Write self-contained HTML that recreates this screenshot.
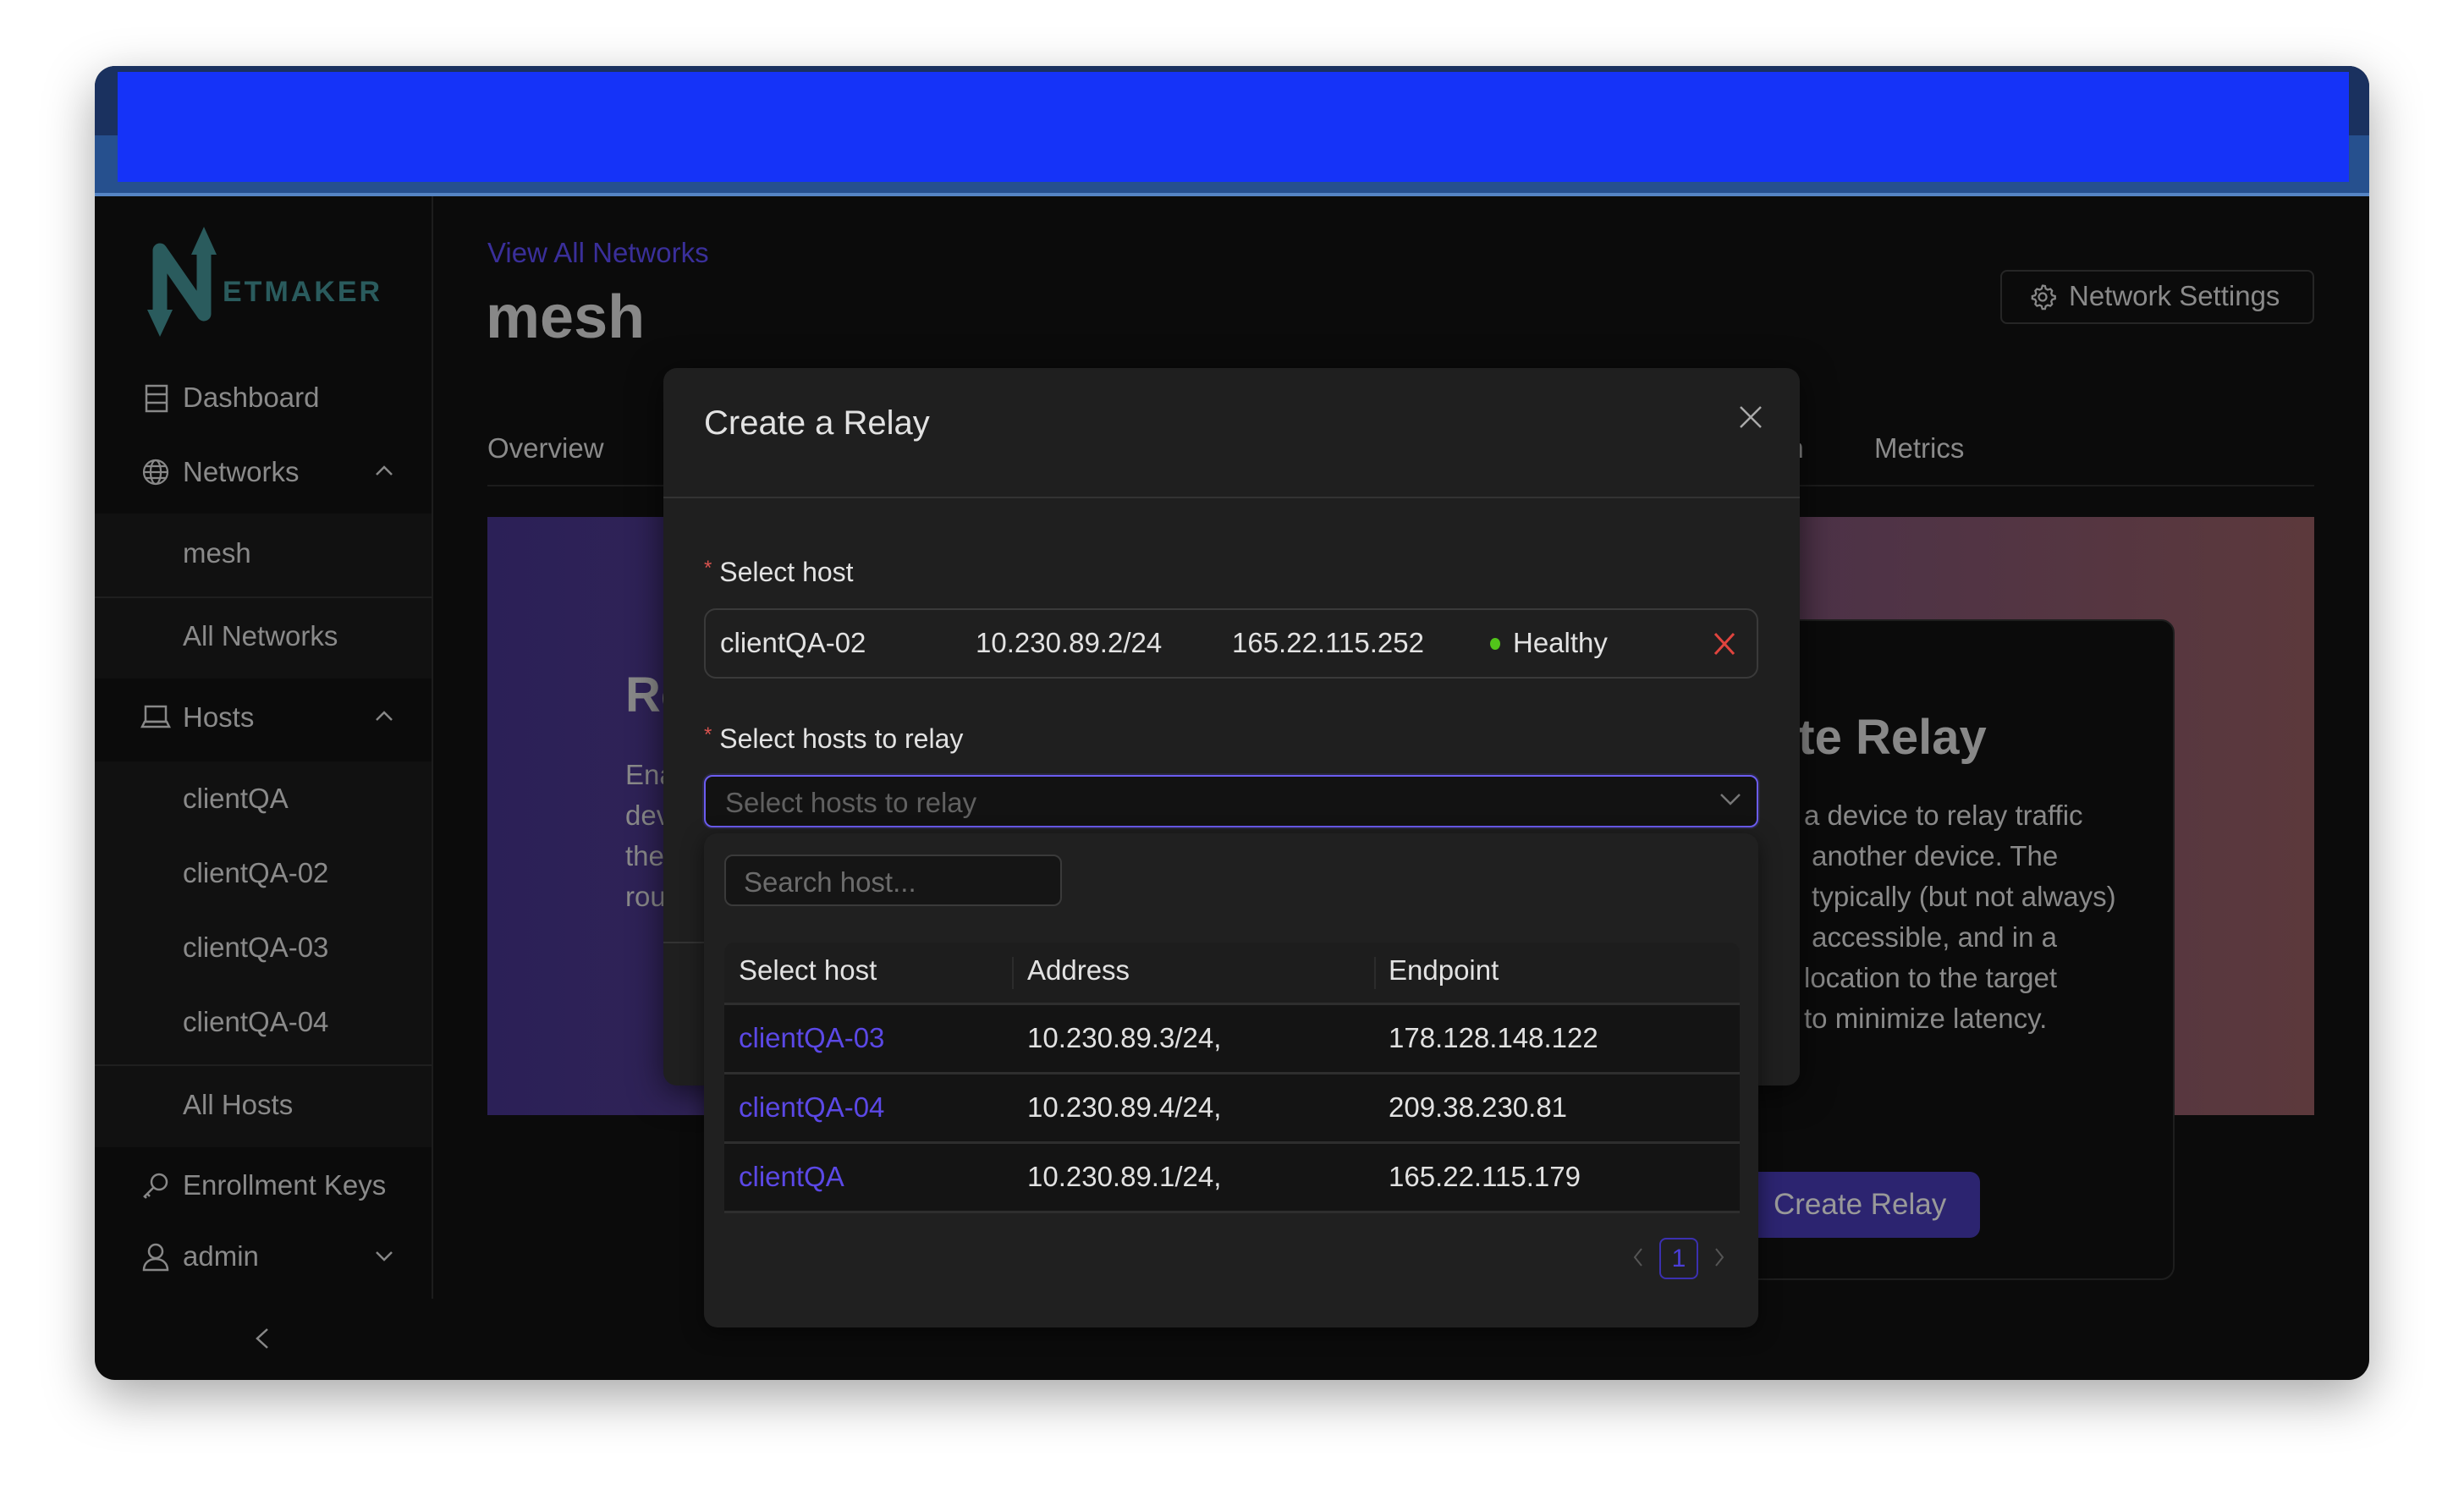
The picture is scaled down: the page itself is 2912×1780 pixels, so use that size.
<!DOCTYPE html>
<html><head><meta charset="utf-8"><style>
*{box-sizing:border-box;margin:0;padding:0}
body{width:2912px;height:1780px;background:#fff;position:relative;overflow:hidden;font-family:"Liberation Sans",sans-serif;}
.a{position:absolute;white-space:nowrap}
.win{position:absolute;left:112px;top:78px;width:2688px;height:1553px;border-radius:24px;overflow:hidden;background:#0b0b0b;box-shadow:0 20px 60px rgba(0,0,0,.35)}
.t{font-size:32px;color:#8a8a8a}
.s{font-size:33px}
.w{color:#e2e2e2}
</style></head><body>
<div class="win">
  <div class="a" style="left:0;top:0;width:2688px;height:82px;background:#1a315f"></div>
  <div class="a" style="left:0;top:82px;width:2688px;height:68px;background:#26508e"></div>
  <div class="a" style="left:0;top:150px;width:2688px;height:4px;background:#5584c4"></div>
  <div class="a" style="left:27px;top:7px;width:2637px;height:130px;background:#1533f8"></div>

  <!-- sidebar -->
  <div class="a" style="left:0;top:154px;width:400px;height:1303px;border-right:2px solid #1d1d1d"></div>
  <div class="a" style="left:0;top:529px;width:398px;height:195px;background:#111"></div>
  <div class="a" style="left:0;top:627px;width:398px;height:2px;background:#1f1f1f"></div>
  <div class="a" style="left:0;top:822px;width:398px;height:456px;background:#111"></div>
  <div class="a" style="left:0;top:1180px;width:398px;height:2px;background:#1f1f1f"></div>

  <svg class="a" style="left:50px;top:188px" width="360" height="135" viewBox="0 0 360 135">
    <g stroke="#2a5b5d" stroke-width="17" stroke-linecap="round" stroke-linejoin="round" fill="none">
      <polyline points="27,110 27,30 79,105 79,25"/>
    </g>
    <polygon points="79,2 94,35 64,35" fill="#2a5b5d"/>
    <polygon points="27,132 12,100 42,100" fill="#2a5b5d"/>
    <text x="101" y="90" font-family="Liberation Sans" font-size="34" font-weight="bold" letter-spacing="3" fill="#2a5b5d">ETMAKER</text>
  </svg>

  <svg class="a" style="left:58px;top:376px" width="30" height="34" viewBox="0 0 30 34" fill="none" stroke="#888" stroke-width="2.5"><rect x="3" y="2" width="24" height="30"/><line x1="3" y1="12" x2="27" y2="12"/><line x1="3" y1="22" x2="27" y2="22"/></svg>
  <div class="a t s" style="left:104px;top:373px">Dashboard</div>
  <svg class="a" style="left:55px;top:463px" width="34" height="34" viewBox="0 0 34 34" fill="none" stroke="#888" stroke-width="2.2"><circle cx="17" cy="17" r="14"/><ellipse cx="17" cy="17" rx="6" ry="14"/><line x1="3" y1="17" x2="31" y2="17"/><line x1="5" y1="10" x2="29" y2="10"/><line x1="5" y1="24" x2="29" y2="24"/></svg>
  <div class="a t s" style="left:104px;top:461px">Networks</div>
  <svg class="a" style="left:330px;top:470px" width="24" height="16" viewBox="0 0 24 16" fill="none" stroke="#888" stroke-width="2.5"><polyline points="3,13 12,4 21,13"/></svg>
  <div class="a t s" style="left:104px;top:557px">mesh</div>
  <div class="a t s" style="left:104px;top:655px">All Networks</div>
  <svg class="a" style="left:54px;top:753px" width="36" height="32" viewBox="0 0 36 32" fill="none" stroke="#888" stroke-width="2.5"><rect x="6" y="4" width="24" height="18"/><path d="M2 28h32l-3-6H5z"/></svg>
  <div class="a t s" style="left:104px;top:751px">Hosts</div>
  <svg class="a" style="left:330px;top:760px" width="24" height="16" viewBox="0 0 24 16" fill="none" stroke="#888" stroke-width="2.5"><polyline points="3,13 12,4 21,13"/></svg>
  <div class="a t s" style="left:104px;top:847px">clientQA</div>
  <div class="a t s" style="left:104px;top:935px">clientQA-02</div>
  <div class="a t s" style="left:104px;top:1023px">clientQA-03</div>
  <div class="a t s" style="left:104px;top:1111px">clientQA-04</div>
  <div class="a t s" style="left:104px;top:1209px">All Hosts</div>
  <svg class="a" style="left:55px;top:1306px" width="34" height="34" viewBox="0 0 34 34" fill="none" stroke="#888" stroke-width="2.5"><circle cx="21" cy="13" r="9"/><path d="M14 20 3 31M7 27l3 3M4 30l2 2"/></svg>
  <div class="a t s" style="left:104px;top:1304px">Enrollment Keys</div>
  <svg class="a" style="left:56px;top:1391px" width="32" height="34" viewBox="0 0 32 34" fill="none" stroke="#888" stroke-width="2.5"><circle cx="16" cy="10" r="8"/><path d="M2 32c0-8 6-13 14-13s14 5 14 13z"/></svg>
  <div class="a t s" style="left:104px;top:1388px">admin</div>
  <svg class="a" style="left:330px;top:1399px" width="24" height="16" viewBox="0 0 24 16" fill="none" stroke="#888" stroke-width="2.5"><polyline points="3,3 12,12 21,3"/></svg>
  <svg class="a" style="left:188px;top:1490px" width="20" height="28" viewBox="0 0 20 28" fill="none" stroke="#888" stroke-width="2.5"><polyline points="16,3 4,14 16,25"/></svg>

  <!-- main -->
  <div class="a" style="left:464px;top:202px;font-size:33px;color:#3a2f9a">View All Networks</div>
  <div class="a" style="left:462px;top:256px;font-size:72px;color:#888;font-weight:bold">mesh</div>
  <div class="a" style="left:2252px;top:241px;width:371px;height:64px;border:2px solid #262626;border-radius:8px"></div>
  <svg class="a" style="left:2285px;top:256px" width="34" height="34" viewBox="0 0 24 24" fill="none" stroke="#888" stroke-width="1.6"><circle cx="12" cy="12" r="3.2"/><path d="M12 2.5l2 .3.6 2.3 1.6.9 2.3-.7 1.4 1.5-.7 2.3.9 1.6 2.3.6v2.2l-2.3.6-.9 1.6.7 2.3-1.4 1.5-2.3-.7-1.6.9-.6 2.3h-2.2l-.6-2.3-1.6-.9-2.3.7-1.4-1.5.7-2.3-.9-1.6-2.3-.6v-2.2l2.3-.6.9-1.6-.7-2.3 1.4-1.5 2.3.7 1.6-.9.6-2.3z"/></svg>
  <div class="a t s" style="left:2333px;top:253px">Network Settings</div>

  <div class="a t s" style="left:464px;top:433px">Overview</div>
  <div class="a t s" style="left:2103px;top:433px">Metrics</div>
  <div class="a t s" style="left:1983px;top:433px">ph</div>
  <div class="a" style="left:464px;top:495px;width:2159px;height:2px;background:#1c1c1c"></div>

  <div class="a" style="left:464px;top:533px;width:2159px;height:707px;background:linear-gradient(90deg,#2b2057 0%,#3b2a55 40%,#5c393c 100%)"></div>
  <div class="a" style="left:1950px;top:654px;width:508px;height:781px;background:#0b0b0b;border:2px solid #1e1e1e;border-radius:16px"></div>
  <div class="a" style="left:627px;top:710px;font-size:58px;font-weight:bold;color:#888">Re</div>
  <div class="a t s" style="left:627px;top:814px;line-height:48px">Ena<br>dev<br>the<br>rou</div>
  <div class="a" style="left:1981px;top:760px;font-size:58px;font-weight:bold;color:#888">ate Relay</div>
  <div class="a t s" style="left:2020px;top:862px;line-height:48px">a device to relay traffic<br>&nbsp;another device. The<br>&nbsp;typically (but not always)<br>&nbsp;accessible, and in a<br>location to the target<br>to minimize latency.</div>
  <div class="a" style="left:1940px;top:1307px;width:288px;height:78px;background:#2c2470;border-radius:12px"></div>
  <div class="a" style="left:1984px;top:1326px;font-size:35px;color:#999">Create Relay</div>

  <!-- modal -->
  <div class="a" style="left:672px;top:357px;width:1343px;height:848px;background:#1f1f1f;border-radius:16px;box-shadow:0 8px 40px rgba(0,0,0,.6)"></div>
  <div class="a" style="left:720px;top:400px;font-size:40px;color:#e2e2e2">Create a Relay</div>
  <svg class="a" style="left:1942px;top:400px" width="30" height="30" viewBox="0 0 30 30" stroke="#aaa" stroke-width="2.5"><line x1="3" y1="3" x2="27" y2="27"/><line x1="27" y1="3" x2="3" y2="27"/></svg>
  <div class="a" style="left:672px;top:509px;width:1343px;height:2px;background:#333"></div>
  <div class="a" style="left:672px;top:1035px;width:60px;height:2px;background:#333"></div>

  <div class="a" style="left:720px;top:580px;font-size:32px;color:#e2e2e2"><span style="color:#d9534f;font-size:24px;vertical-align:8px">*</span> Select host</div>
  <div class="a" style="left:720px;top:641px;width:1246px;height:83px;border:2px solid #3a3a3a;border-radius:14px"></div>
  <div class="a t w s" style="left:739px;top:663px">clientQA-02</div>
  <div class="a t w s" style="left:1041px;top:663px">10.230.89.2/24</div>
  <div class="a t w s" style="left:1344px;top:663px">165.22.115.252</div>
  <div class="a" style="left:1649px;top:676px;width:12px;height:14px;border-radius:50%;background:#52c41a"></div>
  <div class="a t w s" style="left:1676px;top:663px">Healthy</div>
  <svg class="a" style="left:1912px;top:668px" width="28" height="30" viewBox="0 0 28 30" stroke="#e0443e" stroke-width="3"><line x1="3" y1="3" x2="25" y2="27"/><line x1="25" y1="3" x2="3" y2="27"/></svg>

  <div class="a" style="left:720px;top:777px;font-size:32px;color:#e2e2e2"><span style="color:#d9534f;font-size:24px;vertical-align:8px">*</span> Select hosts to relay</div>
  <div class="a" style="left:720px;top:838px;width:1246px;height:62px;border:2px solid #6b5cf0;border-radius:10px;background:#121212;box-shadow:0 0 0 2px rgba(107,92,240,.15)"></div>
  <div class="a" style="left:745px;top:852px;font-size:33px;color:#606060">Select hosts to relay</div>
  <svg class="a" style="left:1920px;top:858px" width="26" height="18" viewBox="0 0 26 18" fill="none" stroke="#777" stroke-width="2.5"><polyline points="2,3 13,14 24,3"/></svg>

  <!-- dropdown -->
  <div class="a" style="left:720px;top:907px;width:1246px;height:584px;background:#202020;border-radius:16px;box-shadow:0 6px 24px rgba(0,0,0,.5)"></div>
  <div class="a" style="left:744px;top:932px;width:399px;height:61px;border:2px solid #3a3a3a;border-radius:10px;background:#151515"></div>
  <div class="a" style="left:767px;top:946px;font-size:33px;color:#6c6c6c">Search host...</div>

  <div class="a" style="left:744px;top:1036px;width:1200px;height:73px;background:#1d1d1d;border-radius:12px 12px 0 0"></div>
  <div class="a" style="left:1084px;top:1053px;width:2px;height:38px;background:#2c2c2c"></div>
  <div class="a" style="left:1512px;top:1053px;width:2px;height:38px;background:#2c2c2c"></div>
  <div class="a t w s" style="left:761px;top:1050px;font-weight:500">Select host</div>
  <div class="a t w s" style="left:1102px;top:1050px">Address</div>
  <div class="a t w s" style="left:1529px;top:1050px">Endpoint</div>
  <div class="a" style="left:744px;top:1107px;width:1200px;height:246px;background:#141414"></div>
  <div class="a" style="left:744px;top:1107px;width:1200px;height:3px;background:#2e2e2e"></div>
  <div class="a" style="left:744px;top:1189px;width:1200px;height:3px;background:#2e2e2e"></div>
  <div class="a" style="left:744px;top:1271px;width:1200px;height:3px;background:#2e2e2e"></div>
  <div class="a" style="left:744px;top:1353px;width:1200px;height:3px;background:#2e2e2e"></div>
  <div class="a t s" style="left:761px;top:1130px;color:#5b48e6">clientQA-03</div>
  <div class="a t w s" style="left:1102px;top:1130px">10.230.89.3/24,</div>
  <div class="a t w s" style="left:1529px;top:1130px">178.128.148.122</div>
  <div class="a t s" style="left:761px;top:1212px;color:#5b48e6">clientQA-04</div>
  <div class="a t w s" style="left:1102px;top:1212px">10.230.89.4/24,</div>
  <div class="a t w s" style="left:1529px;top:1212px">209.38.230.81</div>
  <div class="a t s" style="left:761px;top:1294px;color:#5b48e6">clientQA</div>
  <div class="a t w s" style="left:1102px;top:1294px">10.230.89.1/24,</div>
  <div class="a t w s" style="left:1529px;top:1294px">165.22.115.179</div>

  <svg class="a" style="left:1816px;top:1395px" width="16" height="26" viewBox="0 0 16 26" fill="none" stroke="#555" stroke-width="2"><polyline points="12,3 4,13 12,23"/></svg>
  <div class="a" style="left:1849px;top:1385px;width:46px;height:49px;border:2px solid #3b30b0;border-radius:8px;color:#4a3ed8;font-size:30px;text-align:center;line-height:45px">1</div>
  <svg class="a" style="left:1912px;top:1395px" width="16" height="26" viewBox="0 0 16 26" fill="none" stroke="#555" stroke-width="2"><polyline points="4,3 12,13 4,23"/></svg>
</div>
</body></html>
